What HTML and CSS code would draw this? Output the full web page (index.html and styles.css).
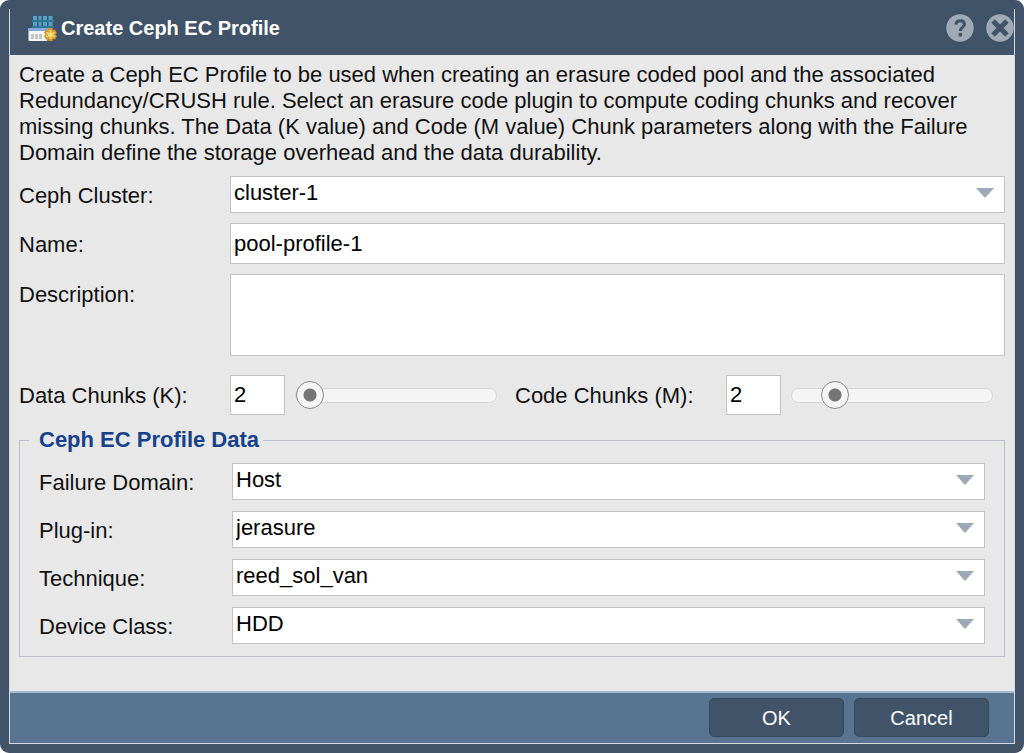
FILE: index.html
```
<!DOCTYPE html>
<html lang="en">
<head>
<meta charset="utf-8">
<meta name="viewport" content="width=device-width, initial-scale=1">
<title>Create Ceph EC Profile</title>
<link rel="stylesheet" href="styles.css">
</head>
<body>
<form class="dialog" aria-labelledby="dialog-title">
  <div class="frame">
    <header class="titlebar">
      <svg class="app-icon" viewBox="0 0 29 29" aria-hidden="true">
        <path fill="#35576f" d="M4 1h22v13H4z"/>
        <g fill="#58a0c4">
          <path d="M5 2h4v4H5zM10.500 2h3v4h-3zM15 2h4v4h-4zM20.500 2h4v4h-4z"/>
          <path d="M5 8h4v4H5zM10.500 8h3v4h-3zM15 8h4v4h-4zM20.500 8h4v4h-4z"/>
        </g>
        <path fill="#2f7897" d="M4 6h22v2H4zM4 12h22v2H4z"/>
        <rect x="0.500" y="14" width="19" height="13" rx="1" fill="#f5f6fa"/>
        <path fill="#86a8df" d="M.5 14h21v3H.5z"/>
        <path fill="#c4c5c9" d="M3 20h3v5H3zM7 20h3v5H7zM11 20h3v5h-3z"/>
        <path d="M22.500 14v13M17 17.300l11 6.400M17 23.700l11-6.400" stroke="#d8921f" stroke-width="4.500"/>
        <circle cx="22.500" cy="20.500" r="5" fill="#e2a02c"/>
        <path d="M22.500 16v9M18.500 18.300l8 4.500M18.500 22.800l8-4.500" stroke="#ffe48c" stroke-width="1.500"/>
      </svg>
      <h1 class="title" id="dialog-title">Create Ceph EC Profile</h1>
      <button class="tool" type="button" aria-label="Help">
        <svg viewBox="0 0 28 28" aria-hidden="true">
          <circle cx="14" cy="14" r="13.700" fill="#a0aab5"/>
          <path d="M9.800 10.700c.3-2.600 2-3.900 4.400-3.900 2.500 0 4.200 1.400 4.200 3.500 0 3.200-4 3-4 6.700" fill="none" stroke="#415368" stroke-width="3"/>
          <circle cx="14.300" cy="20.700" r="2" fill="#415368"/>
        </svg>
      </button>
      <button class="tool" type="button" aria-label="Close">
        <svg viewBox="0 0 28 28" aria-hidden="true">
          <circle cx="14" cy="14" r="13.700" fill="#a0aab5"/>
          <path d="M7 7l14 14M21 7l-14 14" stroke="#415368" stroke-width="5"/>
        </svg>
      </button>
    </header>

    <main class="body">
      <p class="intro">Create a Ceph EC Profile to be used when creating an erasure coded pool and the associated Redundancy/CRUSH rule. Select an erasure code plugin to compute coding chunks and recover missing chunks. The Data (K value) and Code (M value) Chunk parameters along with the Failure Domain define the storage overhead and the data durability.</p>

      <div class="rows">
        <div class="row">
          <label class="label" for="cluster">Ceph Cluster:</label>
          <div class="combo">
            <select class="field select" id="cluster"><option>cluster-1</option></select>
            <svg class="arrow" viewBox="0 0 18 10" aria-hidden="true"><path d="M0 0h18L9 10z"/></svg>
          </div>
        </div>
        <div class="row">
          <label class="label" for="name">Name:</label>
          <input class="field text" id="name" type="text" value="pool-profile-1">
        </div>
        <div class="row row-top">
          <label class="label" for="description">Description:</label>
          <textarea class="field area" id="description"></textarea>
        </div>
      </div>

      <div class="chunks">
        <div class="chunk">
          <label class="label" for="data-chunks">Data Chunks (K):</label>
          <input class="field number" id="data-chunks" type="text" inputmode="numeric" value="2">
          <input class="slider" type="range" min="2" max="20" value="2" aria-label="Data chunks">
        </div>
        <div class="chunk">
          <label class="label" for="code-chunks">Code Chunks (M):</label>
          <input class="field number" id="code-chunks" type="text" inputmode="numeric" value="2">
          <input class="slider" type="range" min="1" max="7" value="2" aria-label="Code chunks">
        </div>
      </div>

      <fieldset class="group">
        <legend class="legend">Ceph EC Profile Data</legend>
        <div class="row">
          <label class="label" for="domain">Failure Domain:</label>
          <div class="combo">
            <select class="field select" id="domain"><option>Host</option></select>
            <svg class="arrow" viewBox="0 0 18 10" aria-hidden="true"><path d="M0 0h18L9 10z"/></svg>
          </div>
        </div>
        <div class="row">
          <label class="label" for="plugin">Plug-in:</label>
          <div class="combo">
            <select class="field select" id="plugin"><option>jerasure</option></select>
            <svg class="arrow" viewBox="0 0 18 10" aria-hidden="true"><path d="M0 0h18L9 10z"/></svg>
          </div>
        </div>
        <div class="row">
          <label class="label" for="technique">Technique:</label>
          <div class="combo">
            <select class="field select" id="technique"><option>reed_sol_van</option></select>
            <svg class="arrow" viewBox="0 0 18 10" aria-hidden="true"><path d="M0 0h18L9 10z"/></svg>
          </div>
        </div>
        <div class="row">
          <label class="label" for="device">Device Class:</label>
          <div class="combo">
            <select class="field select" id="device"><option>HDD</option></select>
            <svg class="arrow" viewBox="0 0 18 10" aria-hidden="true"><path d="M0 0h18L9 10z"/></svg>
          </div>
        </div>
      </fieldset>
    </main>

    <footer class="footer">
      <button class="button" type="submit">OK</button>
      <button class="button" type="button">Cancel</button>
    </footer>
  </div>
</form>
</body>
</html>
```
FILE: styles.css
```
* {
  box-sizing: border-box;
}

body {
  margin: 0;
  background: #fff;
  color: #111;
  font-family: "Liberation Sans", Arial, sans-serif;
  font-size: 22px;
  line-height: 26px;
}

.dialog {
  display: flex;
  min-height: 100vh;
  padding: 9px;
  background: #415368;
  border-radius: 9px;
}

.frame {
  display: flex;
  flex: 1;
  flex-direction: column;
  border: solid #d5dae0;
  border-width: 0 1px 1px;
}

.titlebar {
  display: flex;
  align-items: center;
  gap: 12px;
  height: 46px;
  padding: 0 0 8px 18px;
  background: #415368;
}

.app-icon {
  width: 29px;
  height: 29px;
  margin-right: -8px;
}

.title {
  flex: 1;
  margin: 0;
  color: #fff;
  font-size: 20px;
}

.tool {
  width: 28px;
  height: 28px;
  padding: 0;
  background: none;
  border: 0;
}

.tool svg {
  display: block;
}

.body {
  flex: 1;
  padding: 7px 9px 32px;
  background: #e8e8e8;
}

.intro {
  margin: 0 0 10px;
}

.rows {
  display: grid;
  gap: 10px;
}

.row {
  display: flex;
  align-items: center;
}

.row-top {
  align-items: flex-start;
}

.label {
  flex: none;
  width: 211px;
  padding-top: 3px;
}

.row-top .label {
  padding-top: 8px;
}

.field {
  min-width: 0;
  padding: 0 3px;
  background: #fff;
  border: 1px solid #c3c3c3;
  border-radius: 0;
  color: #000;
  font: inherit;
}

.text {
  flex: 1;
  height: 41px;
}

.area {
  flex: 1;
  height: 82px;
  resize: none;
}

.combo {
  display: grid;
  flex: 1;
}

.select {
  grid-area: 1 / 1;
  width: 100%;
  height: 37px;
  padding-bottom: 3px;
  appearance: none;
}

.arrow {
  grid-area: 1 / 1;
  align-self: center;
  justify-self: end;
  width: 18px;
  height: 10px;
  margin: 0 11px 4px 0;
  fill: #9da9b4;
  pointer-events: none;
}

.chunks {
  display: grid;
  grid-template-columns: 1fr 1fr;
  gap: 18px;
  margin: 19px 12px 12px 0;
}

.chunk {
  display: flex;
  align-items: center;
}

.chunk .label {
  padding-top: 2px;
}

.number {
  width: 55px;
  height: 40px;
  margin-right: 10px;
}

.slider {
  flex: 1;
  min-width: 0;
  height: 28px;
  margin: 0;
  background: none;
  appearance: none;
}

.slider::-webkit-slider-runnable-track {
  height: 15px;
  background: #f5f5f5;
  border: 1px solid #d4d4d4;
  border-radius: 8px;
}

.slider::-webkit-slider-thumb {
  width: 28px;
  height: 28px;
  margin-top: -8px;
  background: radial-gradient(circle, #757575 6px, #f5f5f5 7px);
  border: 1px solid #888;
  border-radius: 50%;
  appearance: none;
}

.group {
  display: grid;
  gap: 11px;
  min-width: 0;
  margin: 0;
  padding: 10px 19px 12px;
  border: 1px solid #b9bccb;
}

.group .label {
  width: 193px;
}

.legend {
  margin-left: -10px;
  padding: 0 4px 0 10px;
  color: #15428b;
  font-weight: bold;
}

.footer {
  display: flex;
  justify-content: flex-end;
  gap: 10px;
  padding: 5px 25px 6px;
  background: #587490;
  border-top: 2px solid #a3b8ca;
}

.button {
  width: 135px;
  height: 39px;
  background: #415368;
  border: 1px solid #36485b;
  border-radius: 5px;
  color: #fff;
  font: inherit;
  font-size: 20px;
}
```
